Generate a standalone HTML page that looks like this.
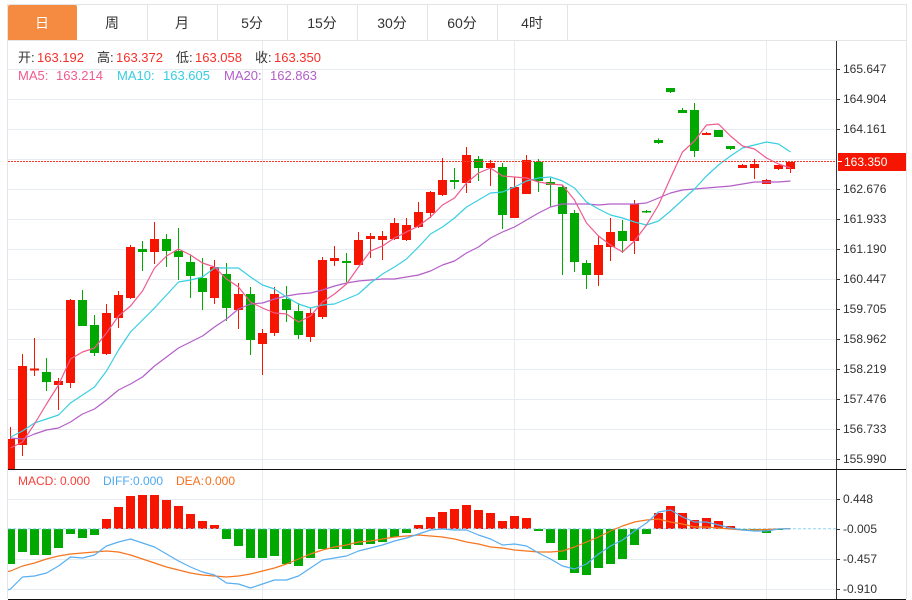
<!DOCTYPE html>
<html lang="zh"><head><meta charset="utf-8"><title>K线</title>
<style>
html,body{margin:0;padding:0;background:#fff;width:912px;height:600px;overflow:hidden}
svg{display:block}
text{font-family:"Liberation Sans","Noto Sans CJK SC",sans-serif;dominant-baseline:auto}
.tab{font-size:14px;fill:#333;text-anchor:middle}
.ax{font-size:12px;fill:#333}
.i{font-size:13px}
.m{font-size:12px}
</style></head><body>
<svg width="912" height="600" viewBox="0 0 912 600" xmlns="http://www.w3.org/2000/svg">
<defs><clipPath id="c"><rect x="8" y="41" width="828" height="428"/></clipPath><clipPath id="d"><rect x="8" y="470" width="828" height="129"/></clipPath></defs>
<!-- tabs -->
<path d="M7.5 4.5H906.5V40.5H7.5Z" fill="none" stroke="#e2e4e6"/>
<path d="M147.5 5V40M217.5 5V40M287.5 5V40M357.5 5V40M427.5 5V40M497.5 5V40M567.5 5V40" stroke="#e2e4e6"/>
<path d="M10 5H75a2 2 0 0 1 2 2V40H8V7a2 2 0 0 1 2-2Z" fill="#f58b40"/>
<text x="42" y="28" class="tab" style="fill:#fff">日</text>
<text x="112" y="28" class="tab">周</text>
<text x="182" y="28" class="tab">月</text>
<text x="252" y="28" class="tab">5分</text>
<text x="322" y="28" class="tab">15分</text>
<text x="392" y="28" class="tab">30分</text>
<text x="462" y="28" class="tab">60分</text>
<text x="532" y="28" class="tab">4时</text>
<!-- grid -->
<path d="M8 69.5H836M8 99.5H836M8 129.5H836M8 159.5H836M8 189.5H836M8 219.5H836M8 249.5H836M8 279.5H836M8 309.5H836M8 339.5H836M8 369.5H836M8 399.5H836M8 429.5H836M8 459.5H836M8 499.5H836M8 559.5H836M8 589.5H836M262.5 41V599M514.5 41V599M766.5 41V599" stroke="#e6ecf1" fill="none"/>
<path d="M7.5 41V599M906.5 41V599" stroke="#e2e6e9" fill="none"/>
<!-- candles -->
<g clip-path="url(#c)" fill="none">
<path stroke="#00a800" stroke-width="1" d="M46.5 358V391M82.5 290V326M94.5 315V356M142.5 241V271M166.5 234V267M178.5 228V280M190.5 255V298M202.5 258V310M226.5 263V321M250.5 287V355M286.5 286V322M298.5 303V339M346.5 253V282M454.5 168V189M478.5 156V181M502.5 163V229M538.5 159V192M550.5 178V207M562.5 185V275M574.5 210V272M586.5 260V289M622.5 220V253M646.5 210V213M658.5 138.5V144M670.5 88V93M682.5 108V113M694.5 103V157M730.5 146V150"/>
<path stroke="#00a800" stroke-width="9" d="M46.5 372V382M82.5 300V326M94.5 325V353M142.5 249V252M166.5 239V251M178.5 251V257M190.5 262V276M202.5 278V292M226.5 274V308M250.5 294V340M286.5 299V310M298.5 311V335M346.5 261V263M454.5 180V182M478.5 159V168M502.5 167V215M538.5 162V181M550.5 182V185M562.5 187V214M574.5 213V262M586.5 263V275M622.5 231V241M646.5 211V212.5M658.5 140V143M670.5 88V92M682.5 110V113M694.5 110V151M718.5 130V137M730.5 146V149"/>
<path stroke="#f51500" stroke-width="1" d="M10.5 427V469M22.5 354V456M34.5 338V376M58.5 378V410M70.5 299V388M106.5 304V355M118.5 291V328M130.5 245V299M154.5 222V264M214.5 260V304M238.5 283V329M262.5 329V375M274.5 287V336M310.5 308V342M322.5 257V319M334.5 246V266M358.5 232V265M370.5 233V258M382.5 231V260M394.5 218V240M406.5 218V241M418.5 202V228M430.5 191V218M442.5 158V196M466.5 147V193M490.5 160V186M514.5 177V218M526.5 155V194M598.5 236V286M610.5 218V261M634.5 200V254M706.5 132V135M742.5 164V168M754.5 159V179M766.5 179V184M778.5 165V170M790.5 162V173"/>
<path stroke="#f51500" stroke-width="9" d="M10.5 439V469M22.5 366V445M34.5 368.5V370.5M58.5 381V385M70.5 300V383M106.5 313V354M118.5 295V318M130.5 247V298M154.5 239V252M214.5 267V298M238.5 294V310M262.5 333V344M274.5 294V333M310.5 313V337M322.5 260V317M334.5 258V261M358.5 240V265M370.5 236V239M382.5 236V240M394.5 223V239M406.5 225V240M418.5 212V227M430.5 192V213M442.5 180V195M466.5 155V183M490.5 163V168M514.5 187V218M526.5 160V194M598.5 245V275M610.5 232V247M634.5 204V241M706.5 133V135M742.5 165V168M754.5 164V168M766.5 180V184M778.5 165V169M790.5 162V169"/>
</g>
<!-- MAs -->
<g clip-path="url(#c)" fill="none" stroke-width="1.2" stroke-linejoin="round">
<polyline stroke="#b45fc9" points="10.5,438 22.5,439 34.5,434 46.5,430 58.5,428 70.5,422 82.5,414 94.5,409 106.5,400 118.5,390 130.5,384 142.5,377 154.5,366 166.5,357 178.5,348 190.5,342 202.5,336 214.5,327 226.5,319 238.5,309 250.5,304 262.5,303 274.5,299 286.5,296 298.5,294 310.5,293 322.5,290 334.5,286 346.5,283 358.5,281 370.5,280 382.5,279 394.5,279 406.5,277 418.5,275 430.5,271 442.5,265 454.5,261 466.5,253 478.5,247 490.5,238 502.5,232 514.5,227 526.5,220 538.5,213 550.5,207 562.5,204 574.5,204 586.5,204 598.5,205 610.5,204 622.5,204 634.5,204 646.5,203 658.5,198 670.5,193 682.5,190 694.5,189 706.5,188 718.5,187 730.5,186 742.5,184 754.5,182 766.5,182 778.5,182 790.5,181"/>
<polyline stroke="#39cfe2" points="10.5,437 22.5,431 34.5,423 46.5,419 58.5,415 70.5,403 82.5,395 94.5,387 106.5,371 118.5,350 130.5,332 142.5,320 154.5,308 166.5,295 178.5,282 190.5,280 202.5,277 214.5,268 226.5,268 238.5,268 250.5,277 262.5,285 274.5,289 286.5,297 298.5,304 310.5,308 322.5,305 334.5,304 346.5,299 358.5,294 370.5,283 382.5,274 394.5,267 406.5,259 418.5,247 430.5,234 442.5,227 454.5,218 466.5,207 478.5,200 490.5,193 502.5,192 514.5,187 526.5,181 538.5,178 550.5,177 562.5,181 574.5,188 586.5,202 598.5,209 610.5,215 622.5,218 634.5,222 646.5,225 658.5,221 670.5,211 682.5,200 694.5,189 706.5,176 718.5,165 730.5,156 742.5,148 754.5,145 766.5,142 778.5,144 790.5,152"/>
<polyline stroke="#f05a8e" points="10.5,448 22.5,442 34.5,424 46.5,404 58.5,385 70.5,359 82.5,352 94.5,348 106.5,333 118.5,316 130.5,306 142.5,291 154.5,268 166.5,256 178.5,249 190.5,255 202.5,263 214.5,267 226.5,279 238.5,287 250.5,302 262.5,308 274.5,313 286.5,314 298.5,322 310.5,316 322.5,302 334.5,294 346.5,284 358.5,267 370.5,251 382.5,246 394.5,238 406.5,232 418.5,226 430.5,217 442.5,205 454.5,198 466.5,183 478.5,173 490.5,168 502.5,176 514.5,177 526.5,178 538.5,182 550.5,184 562.5,185 574.5,200 586.5,223 598.5,236 610.5,245 622.5,252 634.5,241 646.5,225 658.5,205 670.5,178 682.5,152 694.5,141 706.5,125 718.5,124 730.5,136 742.5,146 754.5,149 766.5,158 778.5,164 790.5,168"/>
</g>
<!-- current price line -->
<path d="M8 161.5H836" stroke="#f7382a" stroke-dasharray="2 1" fill="none"/>
<!-- MACD -->
<g clip-path="url(#d)" fill="none">
<path stroke="#00a800" stroke-width="9" d="M10.5 529V564M22.5 529V552M34.5 529V555M46.5 529V555M58.5 529V548M70.5 529V534M82.5 529V538M94.5 529V535M226.5 529V539M238.5 529V546M250.5 529V558M262.5 529V558M274.5 529V556M286.5 529V564M298.5 529V566M310.5 529V558M322.5 529V549M334.5 529V549M346.5 529V549M358.5 529V545M370.5 529V544M382.5 529V542M394.5 529V537M406.5 529V533M538.5 529V531M550.5 529V543M562.5 529V560M574.5 529V573M586.5 529V575M598.5 529V568M610.5 529V564M622.5 529V559M634.5 529V545M646.5 529V534M742.5 529V530M754.5 529V531M766.5 529V533M778.5 529V530"/>
<path stroke="#f51500" stroke-width="9" d="M106.5 519V529M118.5 507V529M130.5 496V529M142.5 495V529M154.5 495V529M166.5 500V529M178.5 506V529M190.5 514V529M202.5 521V529M214.5 525V529M418.5 525V529M430.5 517V529M442.5 512V529M454.5 509V529M466.5 505V529M478.5 510V529M490.5 513V529M502.5 521V529M514.5 516V529M526.5 518V529M658.5 513V529M670.5 506V529M682.5 513V529M694.5 520V529M706.5 518V529M718.5 521V529M730.5 526V529"/>
<path d="M8 528.7H836" stroke="#8fd6f5" stroke-dasharray="3 2"/>
<g stroke-width="1.2" stroke-linejoin="round">
<polyline stroke="#f5761f" points="8,571.5 10.5,571 22.5,566 34.5,563 46.5,559 58.5,556 70.5,554 82.5,553 94.5,552 106.5,551 118.5,552 130.5,555 142.5,559 154.5,563 166.5,567 178.5,570 190.5,573 202.5,575 214.5,576 226.5,577 238.5,576 250.5,574 262.5,571 274.5,568 286.5,564 298.5,559 310.5,554 322.5,550 334.5,547 346.5,545 358.5,542 370.5,541 382.5,539 394.5,537 406.5,536 418.5,535 430.5,536 442.5,537 454.5,539 466.5,542 478.5,544 490.5,547 502.5,548 514.5,550 526.5,551 538.5,552 550.5,552 562.5,551 574.5,547 586.5,542 598.5,537 610.5,531 622.5,526 634.5,522 646.5,520 658.5,519 670.5,522 682.5,524 694.5,527 706.5,527 718.5,528 730.5,529 742.5,530 754.5,530 766.5,529.5 778.5,529 790.5,528.7"/>
<polyline stroke="#58aff2" points="8,590 10.5,589 22.5,577 34.5,576 46.5,573 58.5,566 70.5,557 82.5,558 94.5,555 106.5,546 118.5,542 130.5,539 142.5,543 154.5,547 166.5,554 178.5,561 190.5,567 202.5,572 214.5,575 226.5,583 238.5,584 250.5,588 262.5,584 274.5,580 286.5,580 298.5,576 310.5,568 322.5,560 334.5,558 346.5,556 358.5,551 370.5,548 382.5,545 394.5,541 406.5,538 418.5,534 430.5,530 442.5,529 454.5,530 466.5,530 478.5,535 490.5,539 502.5,545 514.5,544 526.5,546 538.5,553 550.5,559 562.5,566 574.5,569 586.5,564 598.5,554 610.5,546 622.5,540 634.5,531 646.5,523 658.5,512 670.5,510 682.5,517 694.5,522 706.5,522 718.5,525 730.5,528 742.5,530 754.5,531 766.5,531 778.5,529 790.5,528.7"/>
</g>
</g>
<!-- axes -->
<path d="M836.5 41V599" stroke="#333" fill="none"/>
<path d="M8 469.5H906M8 599.5H906" stroke="#111" fill="none"/>
<path d="M836 69.5H840M836 99.5H840M836 129.5H840M836 189.5H840M836 219.5H840M836 249.5H840M836 279.5H840M836 309.5H840M836 339.5H840M836 369.5H840M836 399.5H840M836 429.5H840M836 459.5H840M836 499.5H840M836 529.5H840M836 559.5H840M836 589.5H840" stroke="#333" fill="none"/>
<g class="ax">
<text x="843" y="73" class="ax">165.647</text>
<text x="843" y="103" class="ax">164.904</text>
<text x="843" y="133" class="ax">164.161</text>
<text x="843" y="193" class="ax">162.676</text>
<text x="843" y="223" class="ax">161.933</text>
<text x="843" y="253" class="ax">161.190</text>
<text x="843" y="283" class="ax">160.447</text>
<text x="843" y="313" class="ax">159.705</text>
<text x="843" y="343" class="ax">158.962</text>
<text x="843" y="373" class="ax">158.219</text>
<text x="843" y="403" class="ax">157.476</text>
<text x="843" y="433" class="ax">156.733</text>
<text x="843" y="463" class="ax">155.990</text>
<text x="843" y="503" class="ax">0.448</text>
<text x="843" y="533" class="ax">-0.005</text>
<text x="843" y="563" class="ax">-0.457</text>
<text x="843" y="593" class="ax">-0.910</text>
</g>
<rect x="838" y="153" width="68" height="18" fill="#f51500"/>
<path d="M838 161.5H842" stroke="#fff"/>
<text x="844" y="166" class="ax" style="fill:#fff">163.350</text>
<!-- info -->
<g class="i">
<text x="18" y="62" class="i" fill="#333">开:</text><text x="37" y="62" class="i" fill="#f5302a">163.192</text>
<text x="97" y="62" class="i" fill="#333">高:</text><text x="116" y="62" class="i" fill="#f5302a">163.372</text>
<text x="176" y="62" class="i" fill="#333">低:</text><text x="195" y="62" class="i" fill="#f5302a">163.058</text>
<text x="255" y="62" class="i" fill="#333">收:</text><text x="274" y="62" class="i" fill="#f5302a">163.350</text>
<text x="18" y="80" class="i" fill="#f05a8e">MA5:</text><text x="56" y="80" class="i" fill="#f05a8e">163.214</text>
<text x="117" y="80" class="i" fill="#35cde0">MA10:</text><text x="163" y="80" class="i" fill="#35cde0">163.605</text>
<text x="224" y="80" class="i" fill="#b25ec9">MA20:</text><text x="270" y="80" class="i" fill="#b25ec9">162.863</text>
</g>
<text x="18" y="485" class="m" fill="#f5403a">MACD:</text><text x="60" y="485" class="m" fill="#f5403a">0.000</text>
<text x="103" y="485" class="m" fill="#4da9f0">DIFF:</text><text x="133" y="485" class="m" fill="#4da9f0">0.000</text>
<text x="176" y="485" class="m" fill="#f5701e">DEA:</text><text x="205" y="485" class="m" fill="#f5701e">0.000</text>
</svg>
</body></html>
